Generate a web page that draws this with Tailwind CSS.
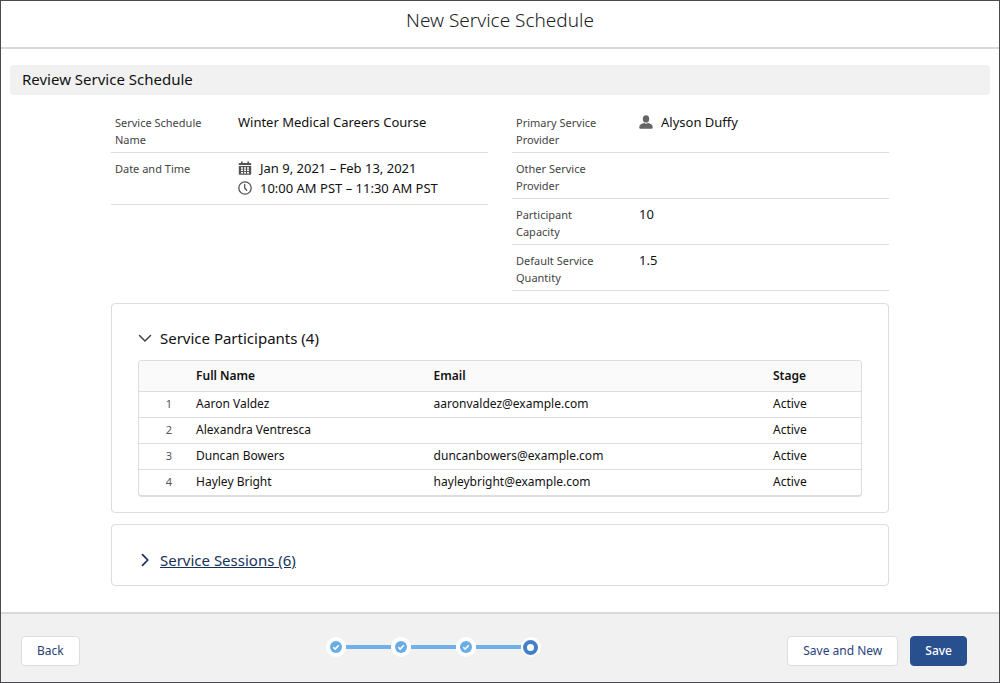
<!DOCTYPE html>
<html lang="en">
<head>
<meta charset="utf-8">
<meta name="viewport" content="width=device-width, initial-scale=1">
<title>New Service Schedule</title>
<script src="https://cdn.jsdelivr.net/npm/@tailwindcss/browser@4"></script>
</head>
<body class="flex min-h-screen flex-col border border-[#4b4a4c] bg-white font-['Noto_Sans','Open_Sans',sans-serif] text-[#111111]">
  <header class="flex h-12 items-center justify-center border-b-2 border-[#d9d9d9] pb-2">
    <h1 class="text-[19px] leading-6 font-light text-[#222222]">New Service Schedule</h1>
  </header>

  <main class="flex-1 px-[9px] pt-4 pb-6">
    <h2 class="rounded bg-[#f1f1f1] px-3 pt-1 pb-[6px] text-[15px] leading-5">Review Service Schedule</h2>

    <div class="mx-[10.3%] mt-3">
      <div class="grid grid-cols-2 items-start gap-6">
        <dl class="text-[13px] leading-5">
          <div class="flex border-b border-[#dddddd] pr-1 pl-1">
            <dt class="w-1/3 pt-[7px] pr-4 pb-1 text-[11px] leading-[17px] text-[#444444]">Service Schedule Name</dt>
            <dd class="flex-1 pt-[5px]">Winter Medical Careers Course</dd>
          </div>
          <div class="flex border-b border-[#dddddd] pr-1 pl-1">
            <dt class="w-1/3 pt-[7px] pr-4 text-[11px] leading-[17px] text-[#444444]">Date and Time</dt>
            <dd class="flex-1 pt-[5px] pb-[6px]">
              <div class="flex items-center gap-2">
                <svg class="size-[14px] shrink-0" viewBox="0 0 14 14" fill="#555555" aria-hidden="true">
                  <path d="M1.500 2H3V.6h1.600V2h4.800V.6H11V2h1.500q.7 0 .7.700V4H.8V2.700q0-.7.700-.7z"/>
                  <path fill-rule="evenodd" d="M.8 4.900h12.400v8q0 .8-.8.800H1.600q-.8 0-.8-.8zM3 6.200v1.500h2V6.200zm3 0v1.500h2V6.200zm3 0v1.500h2V6.200zM3 8.600v1.500h2V8.600zm3 0v1.500h2V8.600zm3 0v1.500h2V8.600zM3 11v1.400h2V11zm3 0v1.400h2V11zm3 0v1.400h2V11z"/>
                </svg>
                <span>Jan 9, 2021 – Feb 13, 2021</span>
              </div>
              <div class="flex items-center gap-2">
                <svg class="size-[14px] shrink-0" viewBox="0 0 14 14" fill="none" stroke="#555555" aria-hidden="true">
                  <circle cx="7" cy="7" r="6.200" stroke-width="1.300"/>
                  <path d="M6.700 3.500V7l2 2.300" stroke-width="1.300" stroke-linecap="round" stroke-linejoin="round"/>
                </svg>
                <span>10:00 AM PST – 11:30 AM PST</span>
              </div>
            </dd>
          </div>
        </dl>

        <dl class="text-[13px] leading-5">
          <div class="flex border-b border-[#dddddd] pr-1 pl-1">
            <dt class="w-1/3 pt-[7px] pr-6 pb-1 text-[11px] leading-[17px] text-[#444444]">Primary Service Provider</dt>
            <dd class="flex-1 pt-[5px]">
              <div class="flex items-center gap-2">
                <svg class="size-[14px] shrink-0" viewBox="0 0 14 14" fill="#666666" aria-hidden="true">
                  <ellipse cx="7" cy="3.900" rx="3.200" ry="3.600"/>
                  <path d="M.3 12.200c0-1.800 1.100-2.700 2.700-3.400.8-.4 1.200-.7 1.700-.7.700 0 1.100.7 2.300.7s1.600-.7 2.300-.7c.5 0 .9.300 1.700.7 1.600.7 2.700 1.600 2.700 3.400 0 1-.5 1.500-1.400 1.500H1.700c-.9 0-1.400-.5-1.400-1.500z"/>
                </svg>
                <span>Alyson Duffy</span>
              </div>
            </dd>
          </div>
          <div class="flex border-b border-[#dddddd] pr-1 pl-1">
            <dt class="w-1/3 pt-[7px] pr-6 pb-1 text-[11px] leading-[17px] text-[#444444]">Other Service Provider</dt>
            <dd class="flex-1 pt-[5px]"></dd>
          </div>
          <div class="flex border-b border-[#dddddd] pr-1 pl-1">
            <dt class="w-1/3 pt-[7px] pr-6 pb-1 text-[11px] leading-[17px] text-[#444444]">Participant Capacity</dt>
            <dd class="flex-1 pt-[5px]">10</dd>
          </div>
          <div class="flex border-b border-[#dddddd] pr-1 pl-1">
            <dt class="w-1/3 pt-[7px] pr-6 pb-1 text-[11px] leading-[17px] text-[#444444]">Default Service Quantity</dt>
            <dd class="flex-1 pt-[5px]">1.5</dd>
          </div>
        </dl>
      </div>

      <section class="mt-3 rounded border border-[#dddddd] px-[26px] pt-6 pb-[15px]">
        <h3>
          <button type="button" aria-expanded="true" class="flex items-center gap-2 text-[15px] leading-5">
            <svg class="size-[14px]" viewBox="0 0 14 14" fill="none" stroke="#444444" stroke-width="1.500" stroke-linecap="round" stroke-linejoin="round" aria-hidden="true"><path d="M1.500 4.500 7 10l5.500-5.500"/></svg>
            <span>Service Participants (4)</span>
          </button>
        </h3>
        <div class="mt-3 overflow-hidden rounded border border-b-2 border-[#dddddd]">
          <table class="w-full table-fixed text-left text-[12px]">
            <thead>
              <tr class="h-[30px] bg-[#fafafa]">
                <td class="w-[6.800%]"></td>
                <th scope="col" class="w-[32.900%] px-2 font-semibold">Full Name</th>
                <th scope="col" class="w-[47%] px-2 font-semibold">Email</th>
                <th scope="col" class="px-2 font-semibold">Stage</th>
              </tr>
            </thead>
            <tbody>
              <tr class="h-[26px] border-t border-[#dddddd]"><td class="pr-4 text-right text-[11px] text-[#555555]">1</td><td class="px-2">Aaron Valdez</td><td class="px-2">aaronvaldez@example.com</td><td class="px-2">Active</td></tr>
              <tr class="h-[26px] border-t border-[#dddddd]"><td class="pr-4 text-right text-[11px] text-[#555555]">2</td><td class="px-2">Alexandra Ventresca</td><td class="px-2"></td><td class="px-2">Active</td></tr>
              <tr class="h-[26px] border-t border-[#dddddd]"><td class="pr-4 text-right text-[11px] text-[#555555]">3</td><td class="px-2">Duncan Bowers</td><td class="px-2">duncanbowers@example.com</td><td class="px-2">Active</td></tr>
              <tr class="h-[26px] border-t border-[#dddddd]"><td class="pr-4 text-right text-[11px] text-[#555555]">4</td><td class="px-2">Hayley Bright</td><td class="px-2">hayleybright@example.com</td><td class="px-2">Active</td></tr>
            </tbody>
          </table>
        </div>
      </section>

      <section class="mt-[11px] rounded border border-[#dddddd] px-[26px] pt-[25px] pb-[15px]">
        <h3>
          <button type="button" aria-expanded="false" class="flex items-center gap-2 text-[15px] leading-5 text-[#16325c]">
            <svg class="size-[14px]" viewBox="0 0 14 14" fill="none" stroke="#1b2a5c" stroke-width="1.700" stroke-linecap="round" stroke-linejoin="round" aria-hidden="true"><path d="M4.500 1.700 9.800 7l-5.300 5.300"/></svg>
            <span class="underline">Service Sessions (6)</span>
          </button>
        </h3>
      </section>
    </div>
  </main>

  <footer class="flex items-center justify-between border-t-2 border-[#d9d9d9] bg-[#f1f1f1] pt-[22px] pr-8 pb-4 pl-5">
    <button type="button" class="h-[30px] rounded border border-[#dddddd] bg-white px-[15px] text-[12px] text-[#2a3f6e]">Back</button>

    <ol class="flex items-center pb-2" aria-label="Progress">
      <li class="flex items-center">
        <span class="flex size-5 items-center justify-center rounded-full bg-white">
          <svg class="size-3" viewBox="0 0 12 12" role="img" aria-label="Step 1 complete"><circle cx="6" cy="6" r="6" fill="#6aade4"/><path d="m3.300 6.200 1.900 1.900 3.600-3.900" fill="none" stroke="#ffffff" stroke-width="1.500"/></svg>
        </span>
        <span class="h-1 w-[45px] bg-[#72b0e8]"></span>
      </li>
      <li class="flex items-center">
        <span class="flex size-5 items-center justify-center rounded-full bg-white">
          <svg class="size-3" viewBox="0 0 12 12" role="img" aria-label="Step 2 complete"><circle cx="6" cy="6" r="6" fill="#6aade4"/><path d="m3.300 6.200 1.900 1.900 3.600-3.900" fill="none" stroke="#ffffff" stroke-width="1.500"/></svg>
        </span>
        <span class="h-1 w-[45px] bg-[#72b0e8]"></span>
      </li>
      <li class="flex items-center">
        <span class="flex size-5 items-center justify-center rounded-full bg-white">
          <svg class="size-3" viewBox="0 0 12 12" role="img" aria-label="Step 3 complete"><circle cx="6" cy="6" r="6" fill="#6aade4"/><path d="m3.300 6.200 1.900 1.900 3.600-3.900" fill="none" stroke="#ffffff" stroke-width="1.500"/></svg>
        </span>
        <span class="h-1 w-[45px] bg-[#72b0e8]"></span>
      </li>
      <li class="flex size-5 items-center justify-center rounded-full bg-white" aria-current="step">
        <span class="size-[15px] rounded-full border-4 border-[#4380c8]"></span>
      </li>
    </ol>

    <div class="flex gap-3">
      <button type="button" class="h-[30px] rounded border border-[#dddddd] bg-white px-[15px] text-[12px] text-[#2a3f7e]">Save and New</button>
      <button type="button" class="h-[30px] rounded border border-[#28508f] bg-[#28508f] px-[14px] text-[12px] font-medium text-white">Save</button>
    </div>
  </footer>
</body>
</html>
